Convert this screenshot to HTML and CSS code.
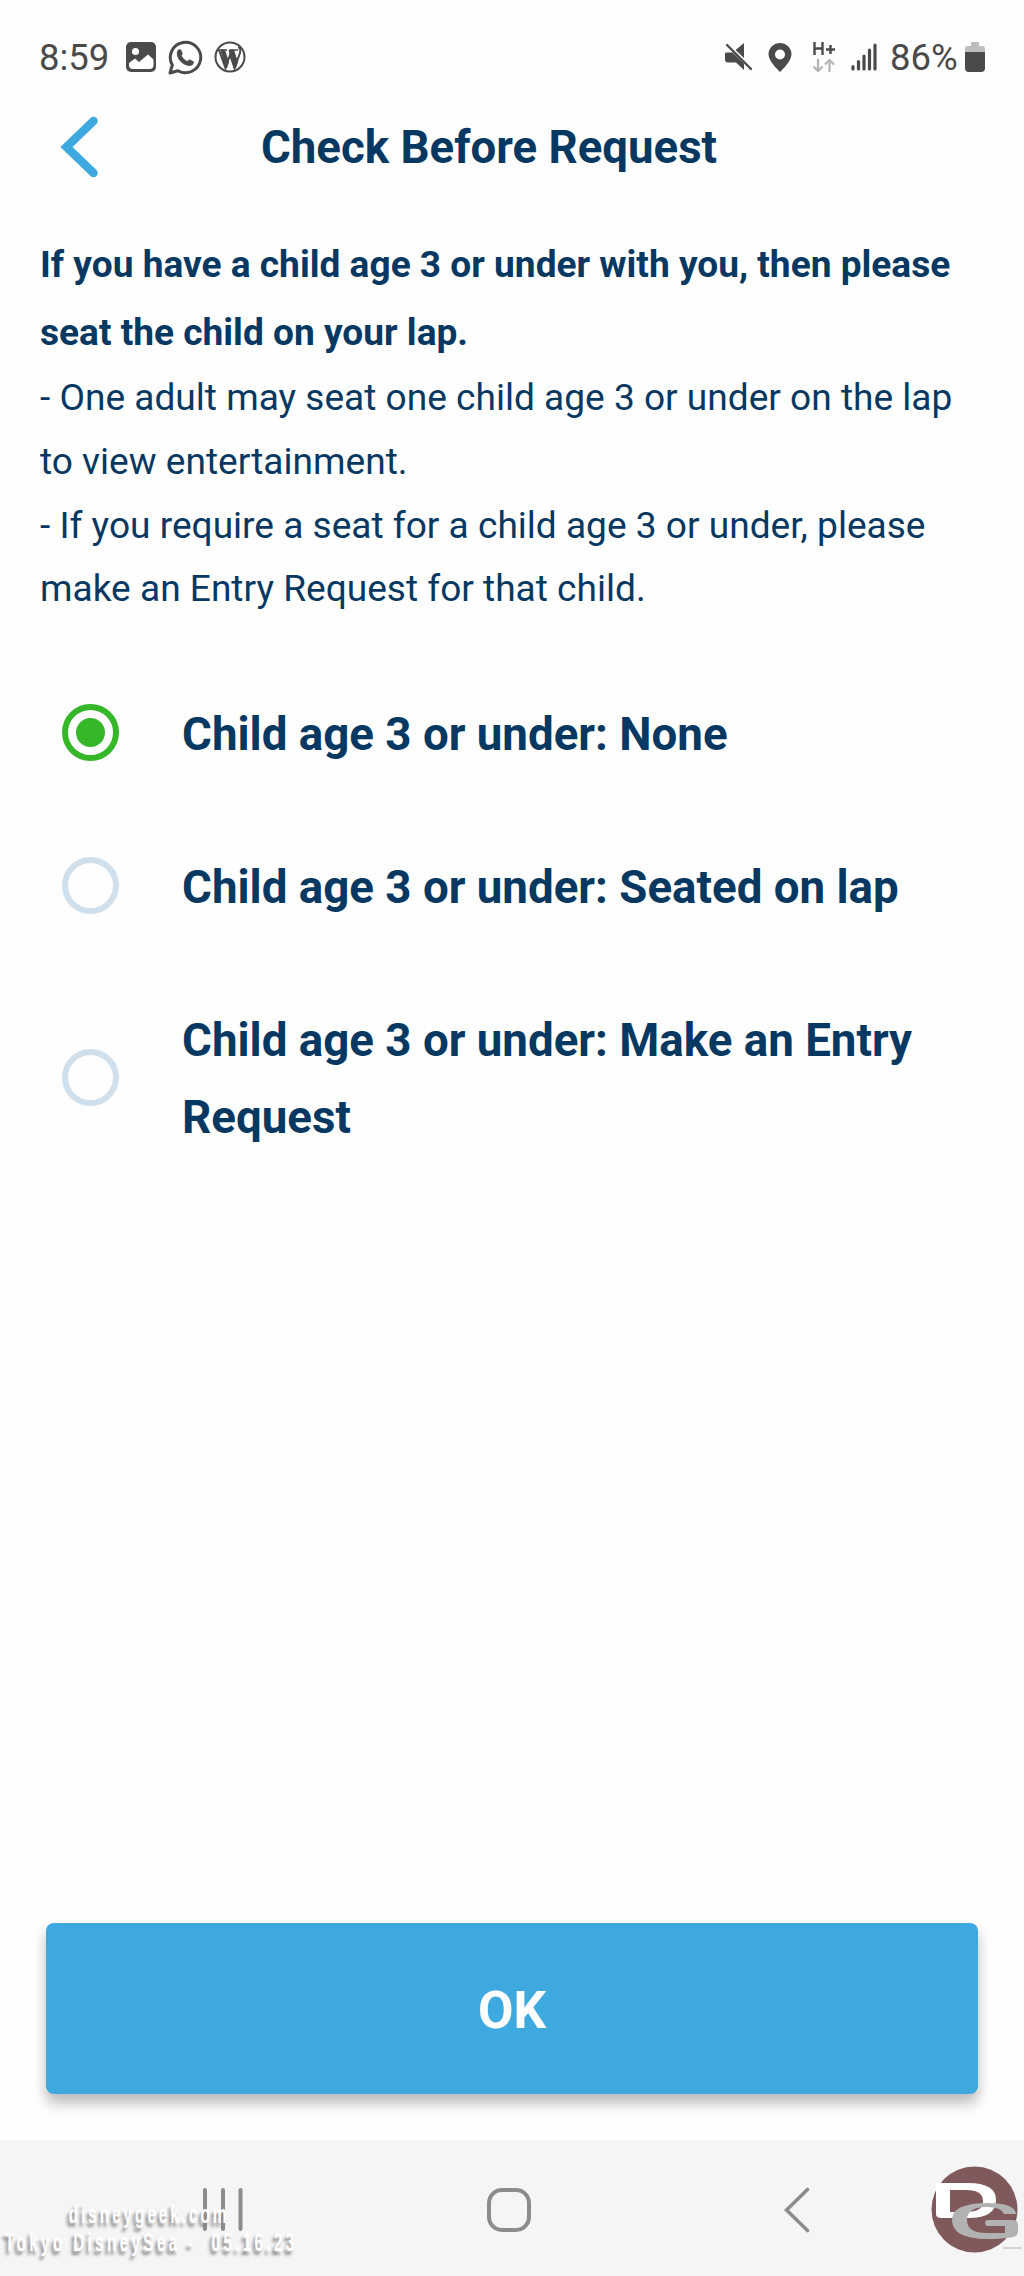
FILE: index.html
```html
<!DOCTYPE html>
<html lang="en">
<head>
    <meta charset="UTF-8">
    <meta name="viewport" content="width=device-width, initial-scale=1.0">
    <title>Check Before Request</title>
    <link rel="stylesheet" href="styles.css">
</head>
<body>
    <div class="screen">
        <div class="status">
            <span class="time">8:59</span>
            <svg class="icon-photo" width="30" height="30" viewBox="0 0 30 30">
                <rect width="30" height="30" rx="5" fill="#4a4a4a"/>
                <circle cx="9.5" cy="9.5" r="3.5" fill="#fff"/>
                <path d="M3 21L9 16.5L13 20L22 12.5L27.500 17.500V23Q27.500 27 23.500 27H7Q3 27 3 23Z" fill="#fff"/>
            </svg>
            <svg class="icon-chat" width="35" height="35" viewBox="0 0 35 35">
                <path d="M2 33L4.300 25A15.200 15.200 0 1 1 10 30.700Z" fill="none" stroke="#4a4a4a" stroke-width="3" stroke-linejoin="round"/>
                <path d="M10.500 9.500Q12.500 8.500 13.500 10.500L14.700 13.500Q14.500 14.800 13.500 15.800Q15.500 19.500 19.300 21.200L21.200 19.300L25.800 21.500Q26 25.500 21.500 26Q16 25.500 12 21Q8 16 9 12Q9.500 10.300 10.500 9.500Z" fill="#4a4a4a"/>
            </svg>
            <svg class="icon-wp" width="32" height="32" viewBox="0 0 32 32">
                <circle cx="16" cy="16" r="14.500" fill="none" stroke="#4a4a4a" stroke-width="2"/>
                <path d="M4 9H13M16 9H24" fill="none" stroke="#4a4a4a" stroke-width="1.500"/>
                <path d="M5 9L11.500 27L16 14L20.500 27L26 12Q27 8 24.500 5.500" fill="none" stroke="#4a4a4a" stroke-width="2"/>
                <path d="M7 9H10.500L14.500 21L12.500 27H11.500ZM15 9H19.500L23.500 21L21.500 27H20.500Z" fill="#4a4a4a" stroke="#4a4a4a"/>
            </svg>
            <div class="status-right">
                <svg class="icon-mute" width="28" height="28" viewBox="0 0 28 28">
                    <path d="M19 0V15L10.500 7ZM1 9.500H7.500L19 20.500V27L11 19.500H3Q0 19.500 0 16.500V11Q0 9.500 1 9.500Z" fill="#4a4a4a"/>
                    <path d="M2 2L26 26" stroke="#4a4a4a" stroke-width="2.400" stroke-linecap="round"/>
                </svg>
                <svg class="icon-pin" width="24" height="29" viewBox="0 0 24 29">
                    <path fill-rule="evenodd" d="M12 0A11.500 11.500 0 0 1 23.500 11.500Q23.500 18 12 29Q.5 18 .5 11.500A11.500 11.500 0 0 1 12 0ZM12 6.500A5 5 0 1 0 12 16.500A5 5 0 1 0 12 6.500Z" fill="#4a4a4a"/>
                </svg>
                <svg class="icon-data" width="22" height="30" viewBox="0 0 22 30">
                    <path d="M1.500 0V13M9.500 0V13M1.500 6.500H9.500M13 7.500H22M17.500 3V12" fill="none" stroke="#4a4a4a" stroke-width="2.400"/>
                    <path d="M5 17V29M.5 24.500L5 29L9.500 24.500M16.500 30V18M12 22.500L16.500 18L21 22.500" fill="none" stroke="#b3b3b3" stroke-width="2.200"/>
                </svg>
                <svg class="icon-signal" width="26" height="28" viewBox="0 0 26 28">
                    <path d="M2 23.500V26M7.500 18.500V26M13 13V26M18.500 7V26M24 2V26" stroke="#4a4a4a" stroke-width="3.200" stroke-linecap="round"/>
                </svg>
                <span class="percent">86%</span>
                <svg class="icon-battery" width="20" height="30" viewBox="0 0 20 30">
                    <path d="M6 0H14V4H17Q20 4 20 7V10H0V7Q0 4 3 4H6Z" fill="#bdbdbd"/>
                    <path d="M0 10H20V26Q20 30 16 30H4Q0 30 0 26Z" fill="#4a4a4a"/>
                </svg>
            </div>
        </div>

        <div class="header">
            <svg class="back" width="40" height="62" viewBox="0 0 40 62">
                <path d="M33.500 5L6.500 31L33.500 57" fill="none" stroke="#3ea9df" stroke-width="8.500" stroke-linecap="round"/>
            </svg>
            <h1 class="title">Check Before Request</h1>
        </div>

        <div class="notice">
            <p class="notice-main">If you have a child age 3 or under with you, then please<br>seat the child on your lap.</p>
            <p class="notice-text">- One adult may seat one child age 3 or under on the lap<br>to view entertainment.<br>- If you require a seat for a child age 3 or under, please<br>make an Entry Request for that child.</p>
        </div>

        <div class="options">
            <div class="option">
                <span class="radio checked"></span>
                <span class="label">Child age 3 or under: None</span>
            </div>
            <div class="option">
                <span class="radio"></span>
                <span class="label">Child age 3 or under: Seated on lap</span>
            </div>
            <div class="option">
                <span class="radio"></span>
                <span class="label">Child age 3 or under: Make an Entry<br>Request</span>
            </div>
        </div>

        <button class="ok">OK</button>

        <div class="navbar">
            <svg class="recents" width="40" height="44" viewBox="0 0 40 44">
                <path d="M2 2V41M20 2V41M37.500 2V41" stroke="#8c8c8c" stroke-width="4" stroke-linecap="round"/>
            </svg>
            <svg class="home" width="44" height="44" viewBox="0 0 44 44">
                <rect x="2" y="2" width="40" height="40" rx="13" fill="none" stroke="#8c8c8c" stroke-width="4"/>
            </svg>
            <svg class="nav-back" width="26" height="46" viewBox="0 0 26 46">
                <path d="M23.500 2.500L2.500 23L23.500 43.500" fill="none" stroke="#8c8c8c" stroke-width="3.600" stroke-linecap="round"/>
            </svg>
            <!-- photo credit over the bar -->
            <div class="credit">
                <span class="credit-site">disneygeek.com</span>
                <span class="credit-place">Tokyo DisneySea -&nbsp; 05.16.23</span>
            </div>
            <svg class="credit-logo" width="93" height="88" viewBox="0 0 93 88">
                <circle cx="43.500" cy="43.500" r="43" fill="#80595a"/>
                <path fill-rule="evenodd" d="M8 17H37Q65 17 65 34Q65 52 37 52H10Q5 52 5 48V20Q5 17 8 17ZM19 24V46H35Q52 46 52 35Q52 24 35 24Z" fill="#fff"/>
                <path d="M85 48H73Q70 41 56 41Q36 41 36 54Q36 67 56 67H74V60H57Q54 60 54 57Q54 54 57 54H82Q87 54 87 59V65Q87 70 82 71Q72 73 57 73Q21 73 21 54Q21 37 57 37Q84 37 85 48Z" fill="#b2b2b2"/>
                <path d="M72 82H91" stroke="#c9c9c9" stroke-width="1.500"/>
            </svg>
        </div>
    </div>
</body>
</html>
```

FILE: styles.css
```css
*{
    padding: 0;
    margin: 0;
    box-sizing: border-box;
}
body{
    background-color: #fefefe;
    color: #063862;
    font-family: Roboto, "Liberation Sans", sans-serif;
}
.screen{
    display: flex;
    flex-direction: column;
    width: 1024px;
    height: 2276px;
    overflow: hidden;
}
.status{
    display: flex;
    align-items: center;
    height: 114px;
    padding: 0 39px 0 39px;
    color: #4a4a4a;
    font-size: 36.5px;
}
.time{
    width: 87px;
}
.icon-chat{
    margin-left: 12px;
}
.icon-wp{
    margin-left: 11px;
}
.status-right{
    display: flex;
    align-items: center;
    margin-left: auto;
}
.icon-pin{
    margin-left: 15px;
}
.icon-data{
    margin-left: 21px;
}
.icon-signal{
    margin-left: 16px;
}
.percent{
    margin-left: 13px;
    width: 75px;
}
.header{
    display: flex;
    align-items: center;
    height: 66px;
    padding-left: 60px;
}
.title{
    margin-left: 161px;
    padding-top: 1px;
    font-size: 45.6px;
    line-height: 66px;
    white-space: nowrap;
}
.notice{
    padding: 51px 40px 0;
    height: 476px;
    white-space: nowrap;
}
.notice-main{
    font-size: 37.1px;
    font-weight: bold;
    line-height: 67.7px;
}
.notice-text{
    font-size: 37.1px;
    line-height: 63.6px;
}
.options{
    flex: 1;
}
.option{
    display: flex;
    align-items: center;
    padding: 38px 0 38px 62px;
}
.radio{
    display: flex;
    align-items: center;
    justify-content: center;
    width: 57px;
    height: 57px;
    border: 6px solid #d0dfec;
    border-radius: 50%;
}
.checked{
    border-color: #35b729;
}
.checked::after{
    content: "";
    width: 29px;
    height: 29px;
    border-radius: 50%;
    background-color: #35b729;
}
.label{
    margin: 2px 0 -2px 63px;
    font-size: 45.7px;
    font-weight: bold;
    line-height: 77px;
    white-space: nowrap;
}
.ok{
    height: 171px;
    margin: 0 46px 46px;
    padding-top: 4px;
    border: none;
    border-radius: 8px;
    background-color: #3ea9df;
    box-shadow: 0 9px 14px rgba(0,0,0,0.27);
    color: #fff;
    font-family: inherit;
    font-size: 51.5px;
    font-weight: bold;
}
.navbar{
    position: relative;
    display: flex;
    align-items: center;
    height: 136px;
    padding: 3px 0 0 203px;
    background-color: #f5f5f5;
}
.home{
    margin-left: 244px;
}
.nav-back{
    margin-left: 253px;
}
.credit{
    position: absolute;
    left: 5px;
    top: 60px;
    display: flex;
    flex-direction: column;
    color: #fff;
    font-family: "Liberation Sans", sans-serif;
    font-size: 25px;
    font-weight: bold;
    line-height: 28px;
    letter-spacing: 5.2px;
    text-shadow: -4px 4px 4px #8c8686;
    transform: scaleX(0.62);
    transform-origin: left;
    white-space: nowrap;
}
.credit-site{
    margin-left: 103px;
    letter-spacing: 4.600px;
}
.credit-logo{
    position: absolute;
    left: 931px;
    top: 26px;
}
```
